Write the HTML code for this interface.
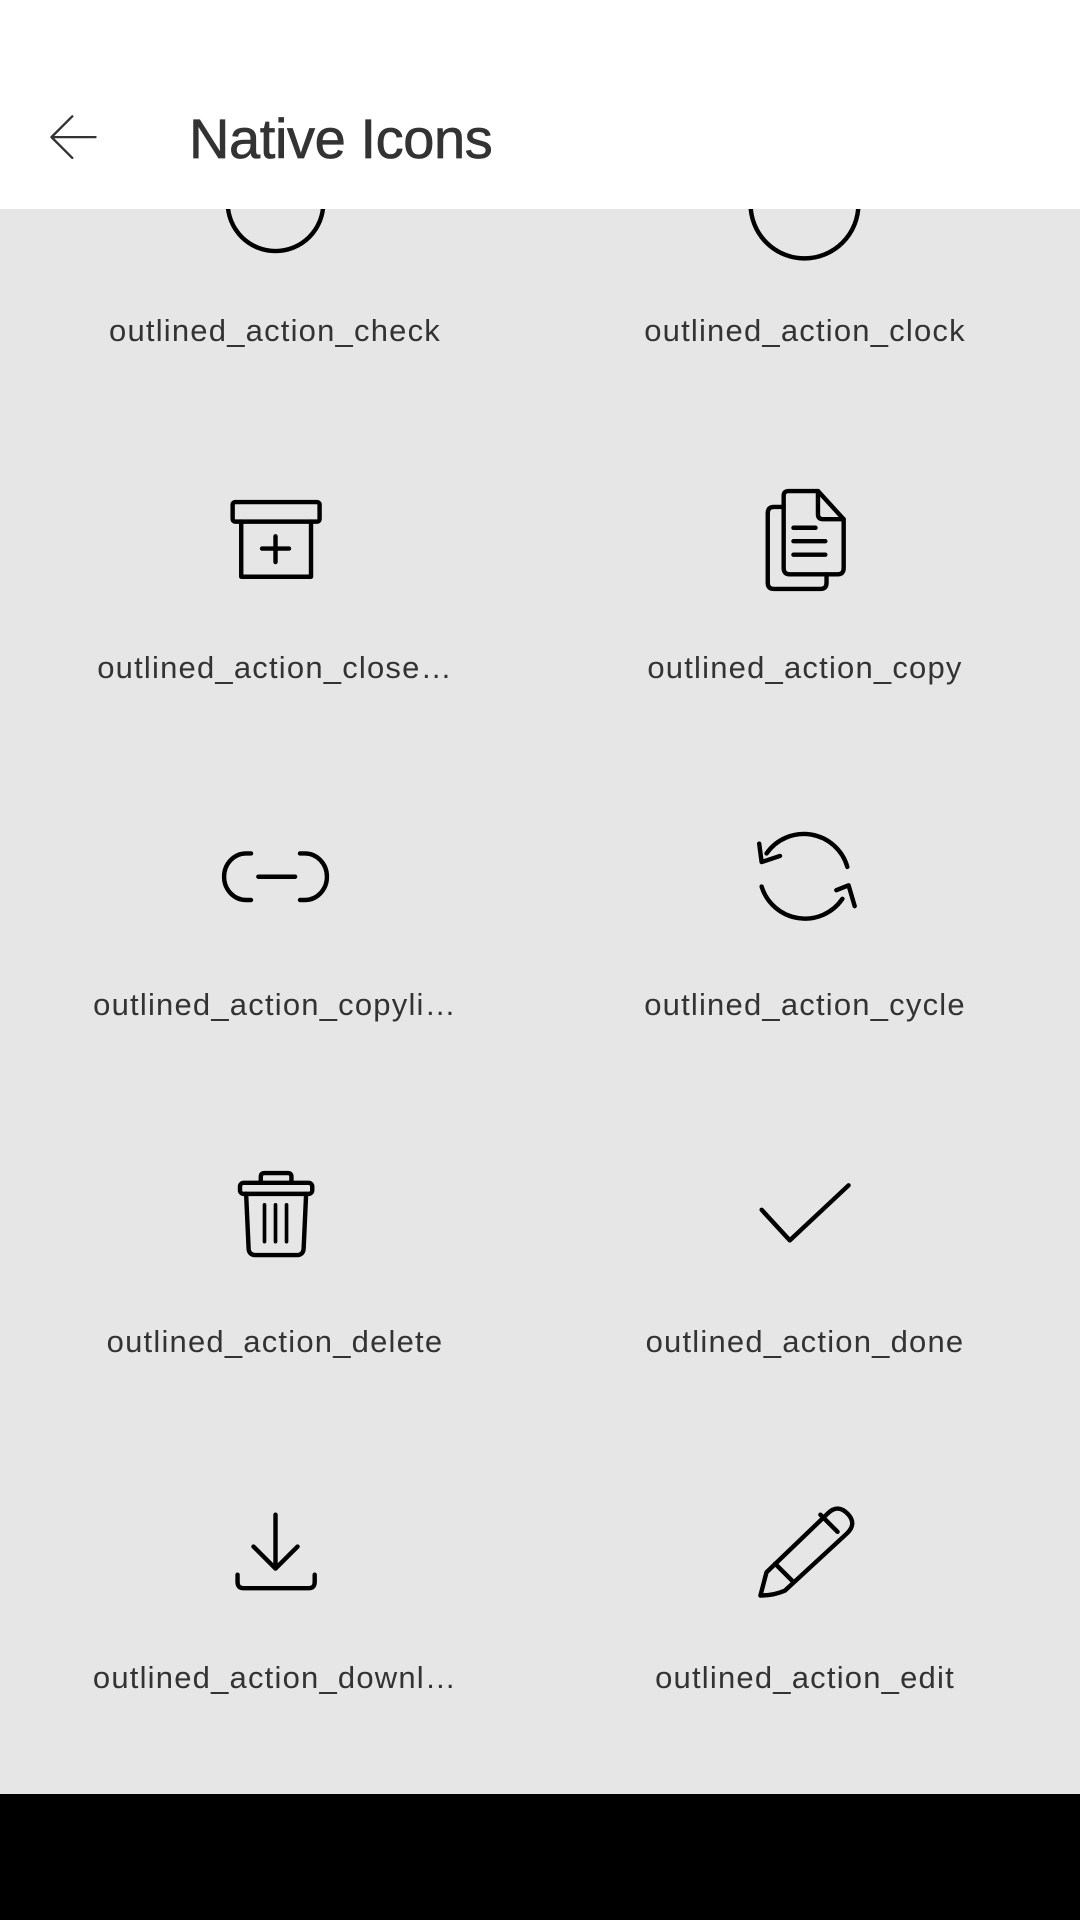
<!DOCTYPE html>
<html><head><meta charset="utf-8"><style>
html,body{margin:0;padding:0;width:1080px;height:1920px;overflow:hidden;background:#e6e6e6;font-family:"Liberation Sans",sans-serif;}
#ic{position:absolute;left:0;top:0;width:1080px;height:1920px;z-index:1}
#hdr{position:absolute;left:0;top:0;width:1080px;height:209px;background:#fff;z-index:2}
#hdr .t{position:absolute;left:189px;top:104px;font-size:56px;letter-spacing:-0.4px;color:#333;line-height:70px;-webkit-text-stroke:0.7px #333}
#bot{position:absolute;left:0;top:1794px;width:1080px;height:126px;background:#000;z-index:3}
.l{position:absolute;width:540px;text-align:center;font-size:31px;letter-spacing:1.2px;color:#333;line-height:40px;z-index:1;white-space:nowrap}
</style></head><body>
<div id="hdr">
<svg style="position:absolute;left:0;top:0" width="1080" height="209" viewBox="0 0 882 170.7"><path d="M78,112 L42,112 M59,95 L42,112 L59,129" fill="none" stroke="#333" stroke-width="1.9" stroke-linecap="round" stroke-linejoin="round"/></svg>
<div class="t">Native Icons</div>
</div>
<svg id="ic" viewBox="0 0 882 1568" fill="none" stroke="#000" stroke-width="3.6" stroke-linecap="round" stroke-linejoin="round">
<circle cx="225" cy="166" r="39"/>
<circle cx="657" cy="167" r="44"/>
<rect x="190" y="410" width="71" height="16" rx="2"/>
<path d="M197,426 L197,471 L254,471 L254,426"/>
<path d="M225,438 L225,459 M214,448 L236,448"/>
<path d="M640,414 L632,414 Q627,414 627,419 L627,476 Q627,481 632,481 L670,481 Q675,481 675,476 L675,469"/>
<path d="M640,405 Q640,401 644,401 L668,401 L689,424 L689,464 Q689,469 684,469 L645,469 Q640,469 640,464 Z"/>
<path d="M668,401 L668,420 Q668,424 672,424 L689,424"/>
<path d="M648,431 L666,431 M648,442 L674,442 M648,453 L674,453"/>
<path d="M205,697 L201,697 A18,19 0 0 0 201,735 L205,735"/>
<path d="M245,697 L249,697 A18,19 0 0 1 249,735 L245,735"/>
<path d="M211,716 L241,716"/>
<path d="M626,697 A37,37 0 0 1 692,708"/>
<path d="M620,689 L622,704 L637,699"/>
<path d="M622,724 A37,37 0 0 0 688,734"/>
<path d="M683,727 L693,723 L698,740"/>
<path d="M213,966 L213,961 Q213,958 216,958 L235,958 Q238,958 238,961 L238,966"/>
<rect x="196" y="966" width="59" height="9" rx="3"/>
<path d="M201,975 L203,1019 Q203,1025 209,1025 L242,1025 Q248,1025 248,1019 L250,975"/>
<path d="M216,984 L216,1014 M225,984 L225,1014 M234,984 L234,1014" stroke-width="3"/>
<path d="M622,988 L645,1013 L693,968"/>
<path d="M225,1237 L225,1280 M207,1263 L225,1281 L243,1263"/>
<path d="M194,1286 L194,1292 Q194,1297 199,1297 L252,1297 Q257,1297 257,1292 L257,1286"/>
<path d="M621,1303 L626,1284 L676,1236 Q684,1228 692,1236 Q700,1244 692,1252 L641,1299 Q632,1303 621,1303 Z"/>
<path d="M633,1277 L647,1291 M670,1237 L684,1251"/>
</svg>
<div class="l" style="left:5px;top:311px">outlined_action_check</div>
<div class="l" style="left:535px;top:311px">outlined_action_clock</div>
<div class="l" style="left:5px;top:648px">outlined_action_close…</div>
<div class="l" style="left:535px;top:648px">outlined_action_copy</div>
<div class="l" style="left:5px;top:985px">outlined_action_copyli…</div>
<div class="l" style="left:535px;top:985px">outlined_action_cycle</div>
<div class="l" style="left:5px;top:1322px">outlined_action_delete</div>
<div class="l" style="left:535px;top:1322px">outlined_action_done</div>
<div class="l" style="left:5px;top:1658px">outlined_action_downl…</div>
<div class="l" style="left:535px;top:1658px">outlined_action_edit</div>
<div id="bot"></div>
</body></html>
